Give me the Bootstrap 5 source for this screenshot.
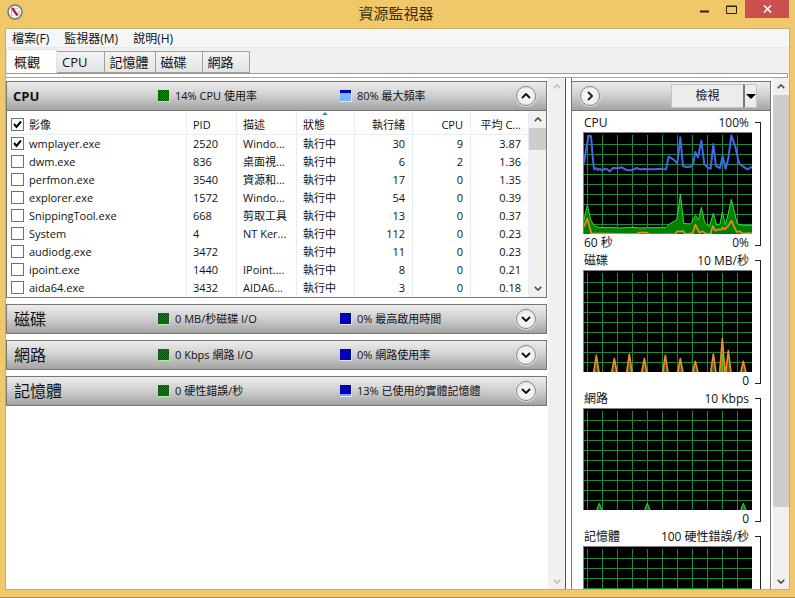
<!DOCTYPE html>
<html lang="zh-Hant">
<head>
<meta charset="utf-8">
<meta name="viewport" content="width=device-width, initial-scale=1">
<title>資源監視器</title>
<link href="https://cdn.jsdelivr.net/npm/bootstrap@5.3.0/dist/css/bootstrap.min.css" rel="stylesheet">
<style>
body{font-family:"Open Sans","Noto Sans CJK TC",sans-serif;font-size:12px;line-height:18px;color:#111;background:#f0c869}
button{font:inherit;color:inherit}
.win{padding:0 5px 8px;box-shadow:inset 0 -1px #a8894a}
.titlebar{height:28px;padding:0 1px 0 2px}
.titlebar h1{font-size:15px;line-height:26px;color:#3d3010;padding-left:78px}
.winbtn{width:27px;height:18px;border:0;background:none;padding:0;display:flex;align-items:center;justify-content:center}
.winbtn.closer{width:44px;background:#c9504e}
.client{background:#fff;border-top:1px solid #b3964f;outline:1px solid #c9ae70;outline-offset:-1px}
.menus{background:#f5f6f7;height:19px;padding-left:7px;gap:15px;border-bottom:1px solid #e8e8e8}
.menus a{color:#111;text-decoration:none;line-height:20px}
.tabstrip{background:#f0f0f0;height:25px;padding:1px 0 0 1px;border:0}
.tabstrip .nav-link{border:1px solid #a0a0a0;border-left-width:0;border-radius:0;color:#111;background:linear-gradient(#f3f3f3,#e4e4e4);padding:0 6px 0 5px;font-size:13px;line-height:20px;height:22px;margin:2px 0 0}
.tabstrip .nav-link.active{background:#fff;color:#111;border-bottom:0;border-left-width:1px;padding:0 16px 0 7px;height:24px;margin:0}
.tabstrip .short{padding-right:15px}
.tabstrip .wide{padding-right:16px}
.tabedge{height:5px;border:1px solid #a5a5a5;border-top-color:#999;background:#fff;margin-right:2px}
.leftpane{padding:3px 1px 0 1px;gap:6px}
.bar{height:30px;border:1px solid #767676;background:linear-gradient(#ececec,#d2d2d2 45%,#a3a3a3);font-size:11px}
.bar h2{font-size:16px;width:151px;padding-left:7px;line-height:26px}
.bar h2.latin{font-size:13px;padding-left:6px}
.stat{width:182px}
.swatch{width:12px;height:12px;margin-right:5px;flex:none;background:#0000b8;border:1px solid #e0e8ff;border-width:0 1px 1px 0}
.swatch.cpu{background:repeating-conic-gradient(#065206 0 25%,#128212 0 50%) 0 0/2px 2px;border-color:#a8f0a0}
.swatch.freq{background:linear-gradient(#0000a8 3px,#74b4fa 3px)}
.swatch.mem{background:linear-gradient(#0000b8 9px,#7ca4f4 9px)}
.round{width:20px;height:20px;border-radius:50%;border:1px solid #8a8a8a;background:radial-gradient(#fff,#e2e2e2);padding:0;display:flex;align-items:center;justify-content:center;box-shadow:0 0 0 1px #dcdcdc}
.stat ~ div + .round{margin:0 10px 0 4px}
.proc{border:1px solid #767676;border-top:0}
.proctable{table-layout:fixed;font-size:11px;line-height:18px;margin:0;--bs-table-bg:transparent}
.proctable th,.proctable td{padding:0 7px 0 6px;border:0;border-right:1px solid #e4eef6;white-space:nowrap;overflow:hidden;text-overflow:ellipsis;font-weight:400;color:#111}
.proctable .desc{padding-right:0}
.proctable th{height:23px;border-bottom:1px solid #e8eef4}
.proctable .first{padding-left:4px}
.proctable .num{text-align:right}
.c-pid{width:50px}.c-desc{width:60px}.c-num{width:58px}
.proctable label{display:flex;align-items:center;gap:5px}
.tick{appearance:none;width:13px;height:13px;border:1px solid #707070;background:#fff;margin:0;border-radius:0;flex:none}
.tick:checked{background:#fff url("data:image/svg+xml,%3Csvg xmlns='http://www.w3.org/2000/svg' viewBox='0 0 11 11'%3E%3Cpath d='M2 5l2.5 3L9 2.500' fill='none' stroke='%23000' stroke-width='2'/%3E%3C/svg%3E")}
.sorted{position:relative}
.sorter{position:absolute;top:1px;left:25px;border:3px solid transparent;border-top:0;border-bottom:3px solid #5a8798}
.sbar{width:16px;background:#f0f0f0;flex:none;color:#505050}
.sbar.inner{width:17px}
.sbar.idle{width:17px;color:#bdbdbd}
.sbar.outer{margin:0 1px 0 2px}
.sbar .end{height:17px;flex:none;display:flex;align-items:center;justify-content:center}
.thumb{background:#cdcdcd}
.divider{width:7px;border-left:1px solid #555;border-right:1px solid #777;background:#fff}
.rightpane{width:199px;padding-top:3px}
.charts{border-right:1px solid #777;padding:3px 9px 0 11px}
.viewbtn{margin-right:13px;font-size:12px}
.viewbtn button{border:1px solid #c4c4c4;background:#ececec;padding:0;height:24px}
.viewbtn .view{width:72px;border-right:0}
.viewbtn .drop{width:14px;border-left:2px solid #777}
.chart{display:block;background:#000;border:solid #808080;border-width:1px 0 0 1px;width:100%;height:102px}
.labels{height:18px;padding:0 3px 0 1px}
.bracket{width:6px;border:1px solid #222;border-left:0;margin:8px 0 6px 3px}
.plot *{stroke-linejoin:round}
</style>
<script src="https://cdn.jsdelivr.net/npm/bootstrap@5.3.0/dist/js/bootstrap.bundle.min.js"></script>
</head>
<body>
<svg width="0" height="0" class="position-absolute" aria-hidden="true">
<defs>
<pattern id="grid" width="15" height="10" patternUnits="userSpaceOnUse" x="3" y="1"><path d="M.5 0V10M0 .5H15" stroke="#1b8a3a" fill="none"/></pattern>
<symbol id="up" viewBox="0 0 10 6"><path d="M1 5l4-4 4 4" fill="none" stroke="currentColor" stroke-width="2"/></symbol>
<symbol id="down" viewBox="0 0 10 6"><path d="M1 1l4 4 4-4" fill="none" stroke="currentColor" stroke-width="2"/></symbol>
</defs>
</svg>
<div class="win vh-100 d-flex flex-column">
<header class="titlebar d-flex align-items-start flex-shrink-0">
<svg width="16" height="16" viewBox="0 0 16 16" class="mt-1" aria-hidden="true"><circle cx="8" cy="8" r="7" fill="#f4f1ee" stroke="#777" stroke-width="1.500"/><path d="M4.500 12V6.500M6 4.500h4.500M12 6v6" stroke="#b9bcc4" fill="none"/><path d="M5 4l5.500 7.500" stroke="#a8232d" stroke-width="2.200"/></svg>
<h1 class="flex-grow-1 text-center m-0 fw-normal">資源監視器</h1>
<button class="winbtn" aria-label="最小化"><svg width="9" height="10"><path d="M0 7.500h9" stroke="#2b220c" stroke-width="2"/></svg></button>
<button class="winbtn" aria-label="最大化"><svg width="11" height="9"><path d="M.5 1h10v7.500H.5zM0 1.500h11" stroke="#2b220c" fill="none"/></svg></button>
<button class="winbtn closer" aria-label="關閉"><svg width="9" height="8"><path d="M1 .5l7 7M8 .5l-7 7" stroke="#fff" stroke-width="1.600"/></svg></button>
</header>
<main class="client flex-grow-1 d-flex flex-column overflow-hidden">
<nav class="menus d-flex flex-shrink-0"><a href="#">檔案(F)</a><a href="#">監視器(M)</a><a href="#">說明(H)</a></nav>
<div class="tabstrip nav nav-tabs flex-nowrap flex-shrink-0" role="tablist">
<button class="nav-link active" role="tab">概觀</button>
<button class="nav-link wide" role="tab">CPU</button>
<button class="nav-link" role="tab">記憶體</button>
<button class="nav-link short" role="tab">磁碟</button>
<button class="nav-link short" role="tab">網路</button>
</div>
<div class="tabedge flex-shrink-0"></div>
<div class="flex-grow-1 d-flex overflow-hidden">
<section class="leftpane flex-grow-1 d-flex flex-column overflow-hidden">
<div>
<div class="bar d-flex align-items-center"><h2 class="latin m-0 fw-bold">CPU</h2><div class="stat d-flex align-items-center"><i class="swatch cpu"></i>14% CPU 使用率</div><div class="flex-grow-1 d-flex align-items-center"><i class="swatch freq"></i>80% 最大頻率</div><button class="round" aria-label="收合 CPU"><svg width="10" height="6"><use href="#up"/></svg></button></div>
<div class="proc d-flex">
<div class="flex-grow-1">
<table class="table proctable">
<colgroup><col><col class="c-pid"><col class="c-desc"><col class="c-num"><col class="c-num"><col class="c-num"><col class="c-num"></colgroup>
<thead><tr><th class="first"><label><input class="tick" type="checkbox" checked>影像</label></th><th>PID</th><th class="desc">描述</th><th class="sorted">狀態<i class="sorter"></i></th><th class="num">執行緒</th><th class="num">CPU</th><th class="num">平均 C...</th></tr></thead>
<tbody>
<tr><td class="first"><label><input class="tick" type="checkbox" checked>wmplayer.exe</label></td><td>2520</td><td class="desc">Windo...</td><td>執行中</td><td class="num">30</td><td class="num">9</td><td class="num">3.87</td></tr>
<tr><td class="first"><label><input class="tick" type="checkbox">dwm.exe</label></td><td>836</td><td class="desc">桌面視...</td><td>執行中</td><td class="num">6</td><td class="num">2</td><td class="num">1.36</td></tr>
<tr><td class="first"><label><input class="tick" type="checkbox">perfmon.exe</label></td><td>3540</td><td class="desc">資源和...</td><td>執行中</td><td class="num">17</td><td class="num">0</td><td class="num">1.35</td></tr>
<tr><td class="first"><label><input class="tick" type="checkbox">explorer.exe</label></td><td>1572</td><td class="desc">Windo...</td><td>執行中</td><td class="num">54</td><td class="num">0</td><td class="num">0.39</td></tr>
<tr><td class="first"><label><input class="tick" type="checkbox">SnippingTool.exe</label></td><td>668</td><td class="desc">剪取工具</td><td>執行中</td><td class="num">13</td><td class="num">0</td><td class="num">0.37</td></tr>
<tr><td class="first"><label><input class="tick" type="checkbox">System</label></td><td>4</td><td class="desc">NT Ker...</td><td>執行中</td><td class="num">112</td><td class="num">0</td><td class="num">0.23</td></tr>
<tr><td class="first"><label><input class="tick" type="checkbox">audiodg.exe</label></td><td>3472</td><td class="desc"></td><td>執行中</td><td class="num">11</td><td class="num">0</td><td class="num">0.23</td></tr>
<tr><td class="first"><label><input class="tick" type="checkbox">ipoint.exe</label></td><td>1440</td><td class="desc">IPoint....</td><td>執行中</td><td class="num">8</td><td class="num">0</td><td class="num">0.21</td></tr>
<tr><td class="first"><label><input class="tick" type="checkbox">aida64.exe</label></td><td>3432</td><td class="desc">AIDA6...</td><td>執行中</td><td class="num">3</td><td class="num">0</td><td class="num">0.18</td></tr>
</tbody>
</table>
</div>
<div class="sbar inner d-flex flex-column"><div class="end"><svg width="8" height="5"><use href="#up"/></svg></div><div class="thumb" style="height:12%"></div><div class="end mt-auto"><svg width="8" height="5"><use href="#down"/></svg></div></div>
</div>
</div>
<div class="bar d-flex align-items-center flex-shrink-0"><h2 class="m-0 fw-normal">磁碟</h2><div class="stat d-flex align-items-center"><i class="swatch cpu"></i>0 MB/秒磁碟 I/O</div><div class="flex-grow-1 d-flex align-items-center"><i class="swatch"></i>0% 最高啟用時間</div><button class="round" aria-label="展開磁碟"><svg width="10" height="6"><use href="#down"/></svg></button></div>
<div class="bar d-flex align-items-center flex-shrink-0"><h2 class="m-0 fw-normal">網路</h2><div class="stat d-flex align-items-center"><i class="swatch cpu"></i>0 Kbps 網路 I/O</div><div class="flex-grow-1 d-flex align-items-center"><i class="swatch"></i>0% 網路使用率</div><button class="round" aria-label="展開網路"><svg width="10" height="6"><use href="#down"/></svg></button></div>
<div class="bar d-flex align-items-center flex-shrink-0"><h2 class="m-0 fw-normal">記憶體</h2><div class="stat d-flex align-items-center"><i class="swatch cpu"></i>0 硬性錯誤/秒</div><div class="flex-grow-1 d-flex align-items-center"><i class="swatch mem"></i>13% 已使用的實體記憶體</div><button class="round" aria-label="展開記憶體"><svg width="10" height="6"><use href="#down"/></svg></button></div>
</section>
<div class="sbar idle d-flex flex-column justify-content-between"><div class="end"><svg width="8" height="5"><use href="#up"/></svg></div><div class="end"><svg width="8" height="5"><use href="#down"/></svg></div></div>
<div class="divider flex-shrink-0"></div>
<aside class="rightpane flex-shrink-0 d-flex flex-column">
<div class="bar d-flex align-items-center flex-shrink-0 border-start-0"><button class="round ms-2 me-auto" aria-label="隱藏圖表"><svg width="6" height="10" viewBox="0 0 6 10"><path d="M1 1l4 4-4 4" fill="none" stroke="#222" stroke-width="2"/></svg></button><div class="viewbtn d-flex"><button class="view">檢視</button><button class="drop" aria-label="檢視選項"><svg width="10" height="5" class="d-block mx-auto"><path d="M0 0h10l-5 5z"/></svg></button></div></div>
<div class="charts flex-grow-1 overflow-hidden">
<div class="d-flex">
<div class="flex-grow-1"><div class="labels d-flex justify-content-between"><span>CPU</span><span>100%</span></div>
<svg class="chart" viewBox="0 0 168 101" preserveAspectRatio="none"><rect y="2" width="169" height="99" fill="url(#grid)"/><g class="plot" transform="translate(-24 -23) scale(.33333)">
<path d="M72 372V330L82 285 92 330 104 348 120 353 150 352 180 354 210 352 240 354 270 353 318 353 328 342 350 330 355 300 361 252 371 340 392 342 407 316 416 330 424 292 434 338 448 350 460 310 470 345 480 342 487 306 496 344 505 310 514 268 532 342 550 346H580V372Z" fill="#008000"/>
<path d="M72 330L82 285 92 330 104 348 120 353 150 352 180 354 210 352 240 354 270 353 318 353 328 342 350 330 355 300 361 252 371 340 392 342 407 316 416 330 424 292 434 338 448 350 460 310 470 345 480 342 487 306 496 344 505 310 514 268 532 342 550 346H580" fill="none" stroke="#35dc35" stroke-width="3"/>
<path d="M72 350L82 326 94 370 228 372 236 368 262 368 266 373H344L352 364H370L376 372 398 370 406 344 418 368 428 364 440 372H452L458 348 466 362 478 358 484 360 488 352 494 358 506 346 514 332 530 366 540 364 546 370H580" fill="none" stroke="#f08a20" stroke-width="5"/>
<path d="M72 160L78 120 86 78H93L98 140 102 178 108 174 114 180 120 176 126 182 135 176 142 178 150 184 158 174 175 175 185 172 200 180 215 181 230 174 240 178 255 177 270 178 285 178 300 176 308 178H318L326 140 340 148 352 160 361 82 369 168 378 171 392 170 400 160 406 126 414 142 424 92 433 162 442 172 452 176 460 102 468 168 480 174 488 138 497 176 505 145 514 76 526 110 537 160 550 170 562 178 570 174 580 168" fill="none" stroke="#4169e8" stroke-width="6"/></g></svg>
<div class="labels d-flex justify-content-between"><span>60 秒</span><span>0%</span></div></div><div class="bracket"></div></div>
<div class="d-flex">
<div class="flex-grow-1"><div class="labels d-flex justify-content-between"><span>磁碟</span><span>10 MB/秒</span></div>
<svg class="chart" viewBox="0 0 168 101" preserveAspectRatio="none"><rect y="2" width="169" height="99" fill="url(#grid)"/><g class="plot" transform="translate(-24 -21) scale(.33333)"><path d="M101 368l8-52 8 52M155 368l8-42 8 42M200 368l8-56 8 56M245 368l8-42 8 42M308 368l8-52 8 52M353 368l8-42 8 42M398 368l8-34 8 34M452 368l8-56 8 56M479 368l8-102 8 102M497 368l8-66 8 66M542 368l8-34 8 34" fill="#4b5a10" stroke="#ee8a2c" stroke-width="5"/><path d="M487 366V310" stroke="#55c80c" stroke-width="5"/></g></svg>
<div class="labels d-flex justify-content-end"><span>0</span></div></div><div class="bracket"></div></div>
<div class="d-flex">
<div class="flex-grow-1"><div class="labels d-flex justify-content-between"><span>網路</span><span>10 Kbps</span></div>
<svg class="chart" viewBox="0 0 168 101" preserveAspectRatio="none"><rect y="2" width="169" height="99" fill="url(#grid)"/><g class="plot" transform="translate(-24 -9) scale(.33333)"><path d="M109 332l9-22 9 22M253 332l9-22 9 22M541 332l9-22 9 22" fill="#0a7a14" stroke="#3adc4a" stroke-width="3"/></g></svg>
<div class="labels d-flex justify-content-end"><span>0</span></div></div><div class="bracket"></div></div>
<div class="d-flex">
<div class="flex-grow-1"><div class="labels d-flex justify-content-between"><span>記憶體</span><span>100 硬性錯誤/秒</span></div>
<svg class="chart" viewBox="0 0 168 101" preserveAspectRatio="none"><rect y="2" width="169" height="99" fill="url(#grid)"/></svg>
</div><div class="bracket"></div></div>
</div>
</aside>
<div class="sbar outer d-flex flex-column"><div class="end"><svg width="8" height="5"><use href="#up"/></svg></div><div class="thumb" style="height:80.4%"></div><div class="end mt-auto"><svg width="8" height="5"><use href="#down"/></svg></div></div>
</div>
</main>
</div>
</body>
</html>
